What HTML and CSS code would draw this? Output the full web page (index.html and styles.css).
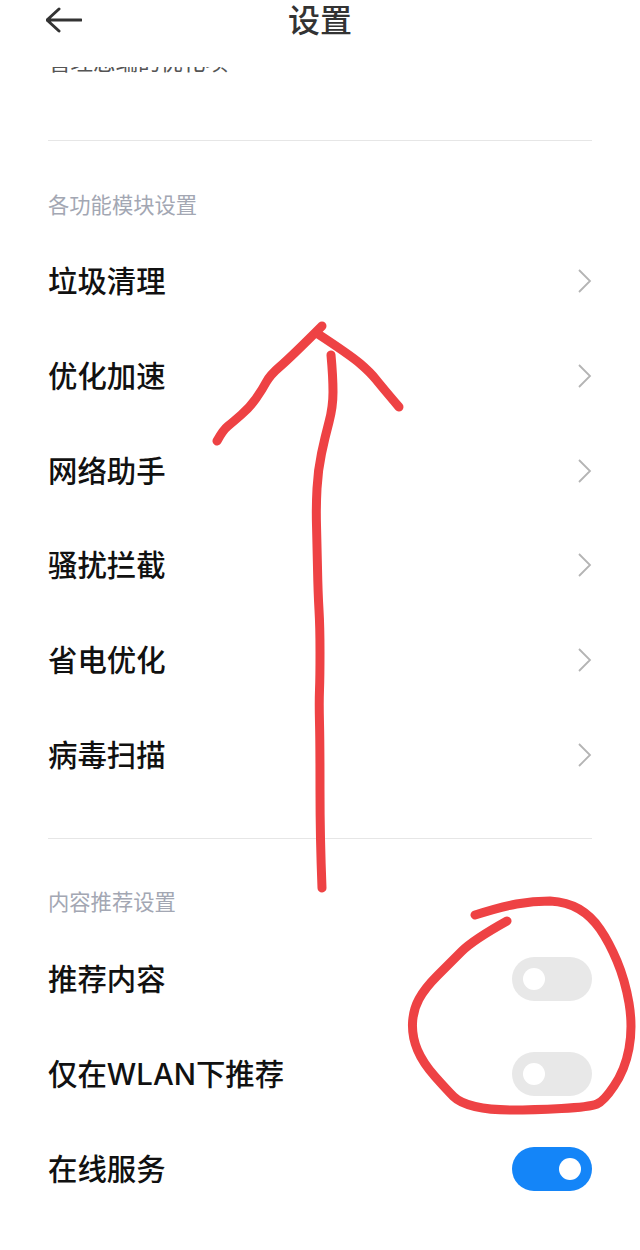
FILE: index.html
```html
<!DOCTYPE html>
<html lang="zh-CN">
<head>
    <meta charset="UTF-8">
    <meta name="viewport" content="width=device-width, initial-scale=1.0">
    <title>设置</title>
    <link rel="stylesheet" href="styles.css">
</head>
<body>
<div class="page">
    <header class="top-bar">
        <svg class="back-icon" width="36" height="42" viewBox="0 0 36 42">
            <path d="M13 9 L1 20 L13 31 M1 20 H35"/>
        </svg>
        <h1>设置</h1>
    </header>

    <div class="intro">管理您端的优化项</div>

    <section class="group">
        <h2>各功能模块设置</h2>
        <div class="row"><span>垃圾清理</span><svg class="chevron" width="14" height="24" viewBox="0 0 14 24"><path d="M1 1 L12 12 L1 23"/></svg></div>
        <div class="row"><span>优化加速</span><svg class="chevron" width="14" height="24" viewBox="0 0 14 24"><path d="M1 1 L12 12 L1 23"/></svg></div>
        <div class="row"><span>网络助手</span><svg class="chevron" width="14" height="24" viewBox="0 0 14 24"><path d="M1 1 L12 12 L1 23"/></svg></div>
        <div class="row"><span>骚扰拦截</span><svg class="chevron" width="14" height="24" viewBox="0 0 14 24"><path d="M1 1 L12 12 L1 23"/></svg></div>
        <div class="row"><span>省电优化</span><svg class="chevron" width="14" height="24" viewBox="0 0 14 24"><path d="M1 1 L12 12 L1 23"/></svg></div>
        <div class="row"><span>病毒扫描</span><svg class="chevron" width="14" height="24" viewBox="0 0 14 24"><path d="M1 1 L12 12 L1 23"/></svg></div>
    </section>

    <section class="group last">
        <h2>内容推荐设置</h2>
        <div class="row"><span>推荐内容</span><div class="switch"></div></div>
        <div class="row"><span>仅在WLAN下推荐</span><div class="switch"></div></div>
        <div class="row"><span>在线服务</span><div class="switch on"></div></div>
    </section>

    <!-- hand drawn marks on top of the screenshot -->
    <svg class="marks" width="640" height="1250" viewBox="0 0 640 1250">
        <path d="M217 441 Q223 430 228 426 Q233 422 241.5 414.5 Q250 407 256 398.5 Q262 390 266 382.5 Q270 375 280 366.5 Q290 358 322 326"/>
        <path d="M318 334 Q350 355 360 363.5 Q370 372 376 379.5 Q382 387 399 407"/>
        <path d="M331 355 Q333 377 333 392 Q333 407 329 422 Q325 437 321.5 453.5 Q318 470 317 488.5 Q316 507 316.5 525 Q317 543 317.5 568 Q318 593 319 610 Q320 627 320 652 Q320 677 319.5 690 Q319 703 319.5 723 Q320 743 320 790 Q320 837 322 888"/>
        <path d="M475 915 Q500 907 516.5 904 Q533 901 550 901 Q567 902 579 909 Q591 916 600 929 Q609 942 617 961 Q625 980 629 1003 Q633 1027 629 1048.5 Q625 1070 614 1086 Q604 1101 597 1104 Q590 1107 561.5 1108.5 Q533 1110 511.5 1110 Q490 1110 475 1106.5 Q460 1103 453.5 1096.5 Q447 1090 435 1076.5 Q423 1063 417.5 1050 Q412 1037 412.5 1023.5 Q413 1010 419 999 Q425 988 437.5 975.5 Q450 963 461.5 951.5 Q473 940 507 921"/>
    </svg>
</div>
</body>
</html>
```
FILE: styles.css
```css
body {
    margin: 0;
    background-color: #fff;
    font-family: Inter, "Noto Sans CJK SC", sans-serif;
    color: #111;
}

.page {
    position: relative;
    width: 640px;
    height: 1250px;
    overflow: hidden;
    padding: 0 48px;
    box-sizing: border-box;
}

.top-bar {
    position: relative;
    z-index: 1;
    height: 67px;
    background-color: #fff;
    display: grid;
    grid-template-columns: 1fr auto 1fr;
    align-items: start;
}

.top-bar h1 {
    margin: 0;
    font-size: 32px;
    line-height: 42px;
    font-weight: 500;
    color: #333;
}

.back-icon {
    margin-left: -2px;
}

.back-icon path {
    fill: none;
    stroke: #333;
    stroke-width: 3;
    stroke-linecap: round;
    stroke-linejoin: round;
}

.intro {
    margin-top: -20px;
    height: 93px;
    font-size: 22.5px;
    line-height: 30px;
    color: #555;
    border-bottom: 1px solid #e6e6e6;
}

.group {
    padding: 48px 0 37px;
    border-bottom: 1px solid #e6e6e6;
}

.group.last {
    border-bottom: none;
    padding: 47px 0 0;
}

.group h2 {
    margin: 0 0 13px;
    padding-top: 1px;
    font-size: 21.3px;
    line-height: 30px;
    font-weight: 400;
    color: #a3a7b3;
}

.group.last h2 {
    margin-bottom: 14px;
}

.row {
    height: 94.7px;
    display: flex;
    align-items: center;
    justify-content: space-between;
    font-size: 29.4px;
    font-weight: 500;
}

.row span {
    margin-bottom: 2px;
}

.chevron {
    margin-top: 2px;
}

.chevron path {
    fill: none;
    stroke: #b4b4b4;
    stroke-width: 1.8;
}

.switch {
    position: relative;
    width: 80px;
    height: 44px;
    margin-top: 2px;
    border-radius: 22px;
    background-color: #e8e8e8;
}

.switch::after {
    content: "";
    position: absolute;
    top: 11px;
    left: 11px;
    width: 22px;
    height: 22px;
    border-radius: 50%;
    background-color: #fff;
}

.switch.on {
    background-color: #1485f8;
}

.switch.on::after {
    left: 47px;
}

.marks {
    position: absolute;
    top: 0;
    left: 0;
    z-index: 2;
}

.marks path {
    fill: none;
    stroke: #ee4244;
    stroke-width: 9;
    stroke-linecap: round;
    stroke-linejoin: round;
}
```
